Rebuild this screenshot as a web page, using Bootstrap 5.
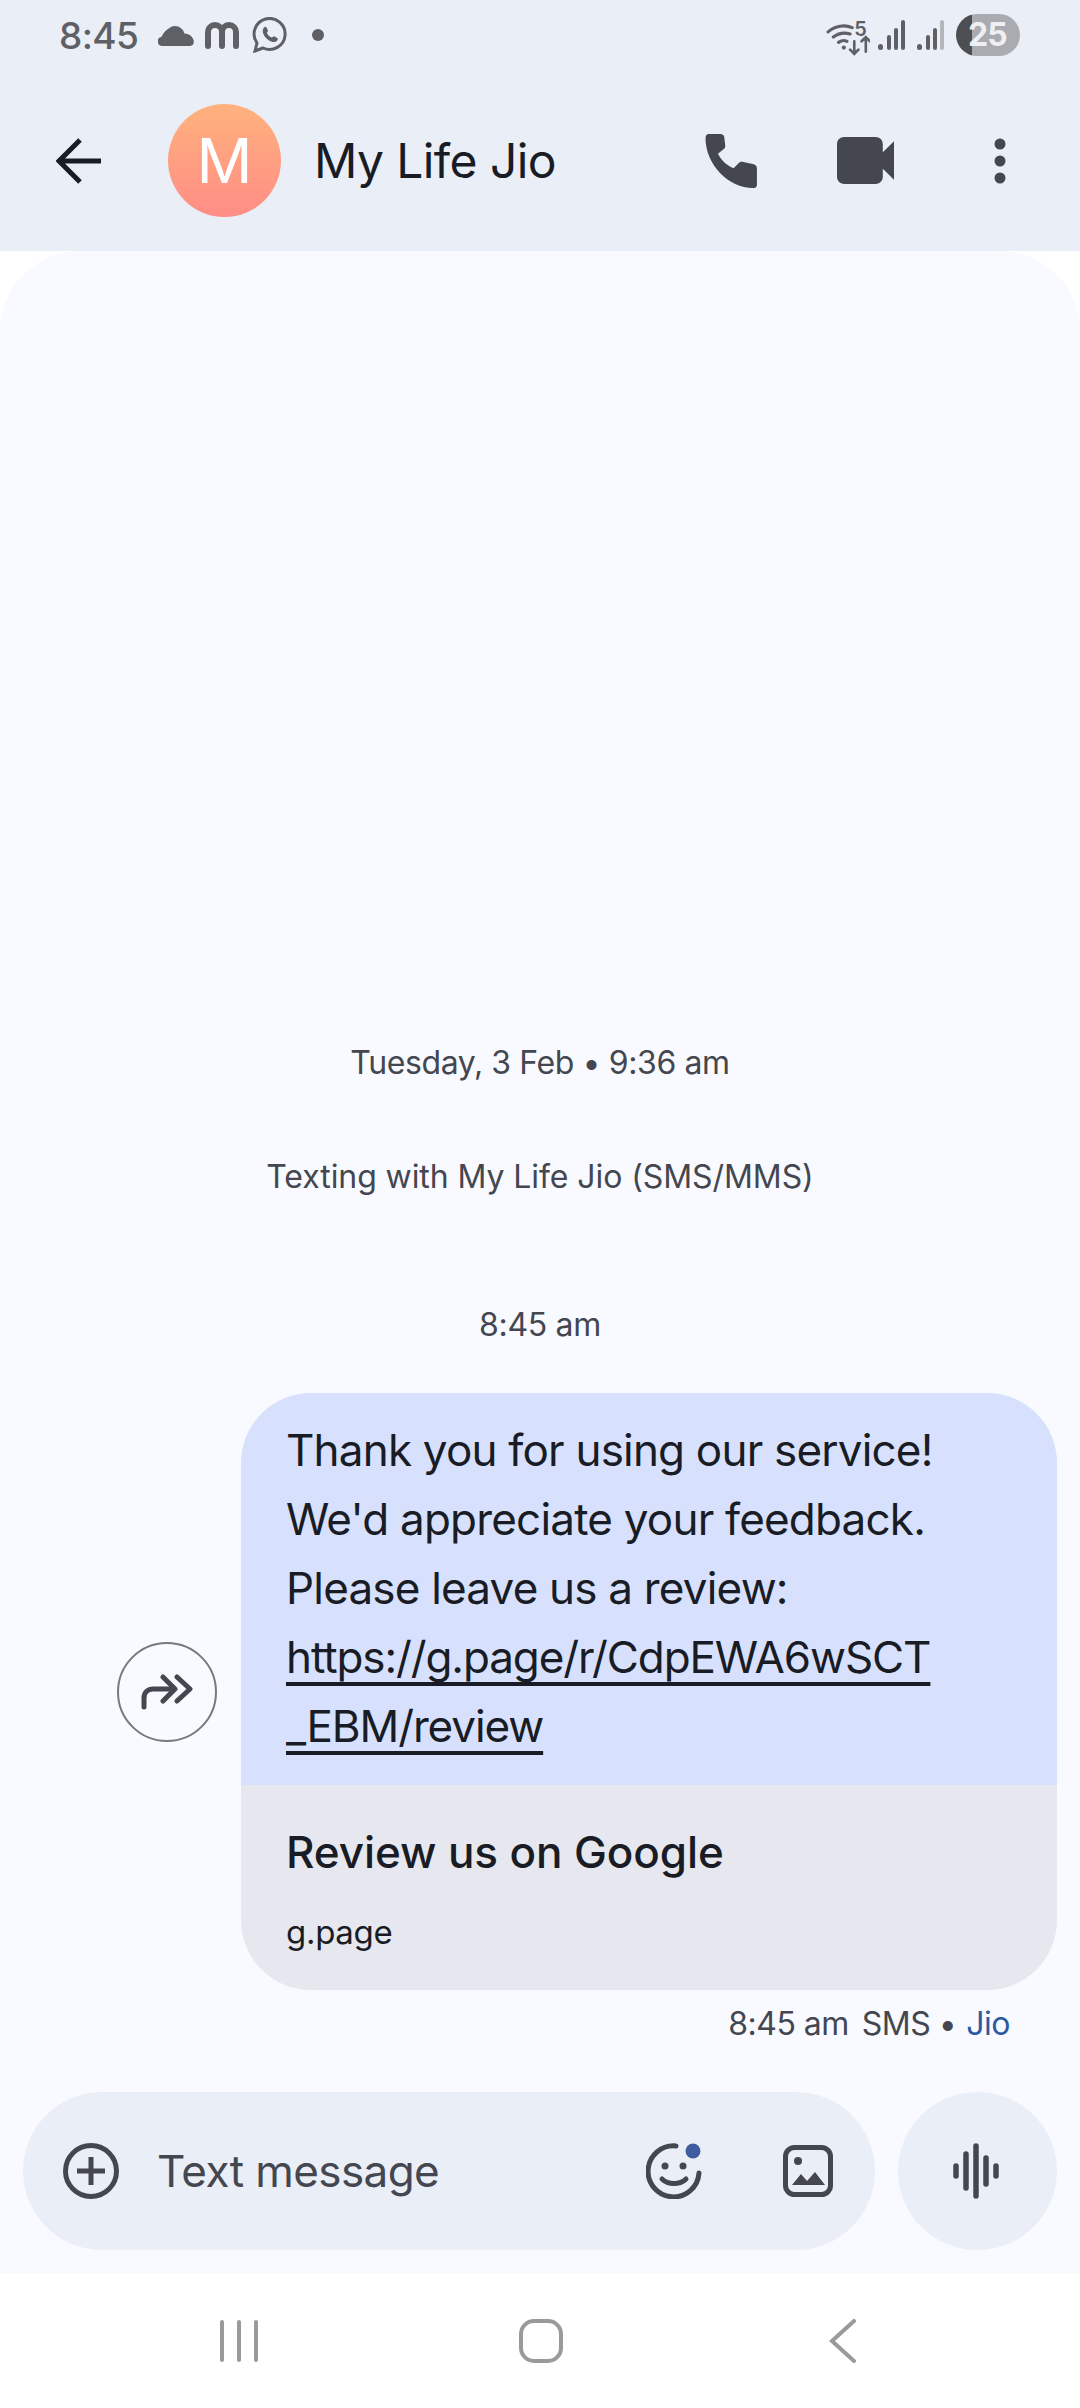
<!DOCTYPE html>
<html lang="en">

<head>
    <meta charset="UTF-8">
    <meta name="viewport" content="width=device-width, initial-scale=1">
    <title>My Life Jio</title>
    <link href="https://cdn.jsdelivr.net/npm/bootstrap@5.3.3/dist/css/bootstrap.min.css" rel="stylesheet">
    <style>
        html, body { height: 2408px; }
        body { width: 1080px; background: #fff; font-family: "Inter", "Liberation Sans", sans-serif; color: #191c24; overflow: hidden; }
        svg { display: block; flex: none; }

        .phone-top { height: 251px; background: #eaeef6; }
        .status-row { height: 70px; padding: 0 60px 0 59px; color: #5e6065; }
        .status-time { font-size: 37px; font-weight: 500; letter-spacing: -.6px; line-height: 1; width: 99px; }
        .status-m { margin-left: 10px; }
        .status-wa { margin-left: 12px; }
        .status-dot { margin-left: 24px; }
        .status-sig1 { margin-left: 8px; }
        .status-sig2 { margin-left: 12px; }
        .battery-pill { width: 64px; height: 42px; margin-left: 12px; border-radius: 21px; background: linear-gradient(90deg, #4d4e52 0 16px, #aaabb0 16px); color: #eeeff3; font-size: 32px; font-weight: 700; line-height: 42px; padding-left: 12px; letter-spacing: -1px; }

        .app-bar { height: 181px; padding-left: 56px; }
        .person-pic { width: 113px; height: 113px; margin-left: 67px; background: linear-gradient(#ffb27d, #ff8d86); color: #fff; font-size: 62px; line-height: 1; }
        .person-name { font-size: 48px; letter-spacing: -.6px; margin-left: 33px; line-height: 1; }
        .bar-call { margin-left: 149px; }
        .bar-video { margin-left: 78px; }
        .bar-more { margin-left: 100px; }

        .thread { background: #f8faff; border-radius: 80px 80px 0 0; min-height: 0; }
        .info-text { font-size: 32px; letter-spacing: -.3px; color: #44474f; text-align: center; line-height: 1; }
        .info-date { margin-bottom: 82px; letter-spacing: -.4px; }
        .info-with { margin-bottom: 116px; letter-spacing: -.08px; }
        .info-time { margin-bottom: 52px; }

        .msg-row { padding-right: 23px; }
        .forward-btn { width: 100px; height: 100px; border: 2px solid #77797e; margin-right: 24px; }
        .msg-bubble { width: 816px; border-radius: 70px; overflow: hidden; }
        .msg-body { background: #d7e1fd; height: 392px; padding: 23px 45px 0; font-size: 44px; line-height: 69px; letter-spacing: -.8px; }
        .msg-body u { letter-spacing: -1.1px; text-underline-offset: 9px; text-decoration-thickness: 4px; }
        .msg-card { background: #e6e7ef; height: 205px; padding: 33px 45px 0; }
        .card-head { font-size: 44px; font-weight: 500; letter-spacing: -.1px; line-height: 68px; }
        .card-site { font-size: 33px; letter-spacing: -.3px; line-height: 40px; margin-top: 26px; }
        .msg-meta { height: 102px; padding: 16px 70px 0 0; font-size: 32px; color: #44474f; letter-spacing: -.5px; line-height: 36px; }
        .meta-sms { margin-left: 13px; }
        .sim-name { color: #2c5aa0; margin-left: 10px; }

        .composer { padding: 0 23px 23px; gap: 23px; }
        .text-pill { width: 852px; height: 158px; background: #eaeef6; border-radius: 79px; padding-left: 40px; }
        .text-hint { font-size: 44px; letter-spacing: -.6px; color: #44474f; margin-left: 38px; line-height: 1; }
        .emoji-btn { margin-left: 207px; }
        .image-btn { margin-left: 81px; }
        .voice-btn { width: 159px; height: 158px; background: #eaeef6; padding-right: 4px; }

        .nav-strip { height: 135px; background: #fff; padding-left: 220px; }
        .nav-home { margin-left: 261px; }
        .nav-back { margin-left: 266px; }
    </style>
</head>

<body class="d-flex flex-column">
    <!-- status bar + app bar -->
    <header class="phone-top flex-shrink-0">
        <div class="status-row d-flex align-items-center">
            <span class="status-time">8:45</span>
            <svg width="36" height="21" viewBox="0 0 34 20" fill="#5e6065"><path d="M4 20a4.500 4.500 0 0 1-.8-8.900C5 7 8 4.500 13 1.500 18-.5 24 3 25 8c5 0 9 4 9 8 0 2-1.500 4-3.500 4z"/></svg>
            <svg class="status-m" width="36" height="28" viewBox="0 0 36 28" fill="none" stroke="#5e6065" stroke-width="6" stroke-linecap="round"><path d="M4 25V11a7 7 0 0 1 14 0v14M18 11a7 7 0 0 1 14 0v14"/></svg>
            <svg class="status-wa" width="36" height="36" viewBox="0 0 36 36" fill="none" stroke="#5e6065"><path stroke-width="3" d="M3 34l2-8A15.500 15.500 0 1 1 11 31z"/><path fill="#5e6065" stroke="none" d="M12 10.500c1-1 2-1 2.500 0l1.500 3c.3.700-1.200 1.800-1 2.500.8 2 2.500 3.500 4.500 4.500.8.200 2-1.500 2.700-1.200l3 1.600c1 .6.800 1.500 0 2.500-1.500 1.800-3.500 2-6 1-3.800-1.500-6.500-4.200-8-8-.8-2.300-.5-4.300.8-5.900z"/></svg>
            <svg class="status-dot" width="12" height="12" viewBox="0 0 12 12" fill="#5e6065"><circle cx="6" cy="6" r="6"/></svg>
            <span class="flex-grow-1"></span>
            <svg width="44" height="44" viewBox="0 -9 42 42" fill="none" stroke="#5e6065" stroke-width="3" stroke-linecap="round"><path d="M2 9C9 3 18 2 25 5M7 14c5-4 11-4.500 16-3M12 19c3-2 6-2 8-1"/><circle cx="17" cy="24" r="2" fill="#5e6065" stroke="none"/><path stroke-width="2.500" d="M27 18v12m-4-4l4 4 4-4M38 28V14m-4 4l4-4 4 4"/><text x="27" y="13" font-size="19" font-weight="600" fill="#5e6065" stroke="none" font-family="Inter, sans-serif">5</text></svg>
            <svg class="status-sig1" width="27" height="30" viewBox="0 0 27 30" fill="#5e6065"><rect x="0" y="24" width="5" height="6" rx="2.500"/><rect x="9" y="15" width="4" height="15" rx="2"/><rect x="16" y="8" width="4" height="22" rx="2"/><rect x="23" y="0" width="4" height="30" rx="2"/></svg>
            <svg class="status-sig2" width="27" height="30" viewBox="0 0 27 30" fill="#5e6065"><rect x="0" y="24" width="5" height="6" rx="2.500"/><rect x="9" y="15" width="4" height="15" rx="2"/><rect x="16" y="8" width="4" height="22" rx="2"/><rect x="23" y="0" width="4" height="30" rx="2" fill="#b4b6ba"/></svg>
            <span class="battery-pill">25</span>
        </div>
        <div class="app-bar d-flex align-items-center">
            <svg width="45" height="46" viewBox="0 0 45 46" fill="none" stroke="#191c24" stroke-width="5"><path d="M45 23H4M24 2L3 23l21 21"/></svg>
            <span class="person-pic rounded-circle d-flex align-items-center justify-content-center">M</span>
            <span class="person-name">My Life Jio</span>
            <svg class="bar-call" width="54" height="54" viewBox="0 0 51 52" fill="#44474f"><path d="M3 0h11c2 0 4 1 4 3l1 8c0 2-.500 3-2 4l-5 4c3 6 8 11 15 14l5-5c1.500-1.500 3-1.500 4.500-1l9 2c2.500.500 4 2 4 4v16c0 2-1.500 3-3.500 3C22 52 0 29 0 4c0-2 1-4 3-4z"/></svg>
            <svg class="bar-video" width="57" height="47" viewBox="0 0 56 46" fill="#44474f"><path d="M7 0h31c4 0 7 3 7 7v8l11-11v38L45 31v8c0 4-3 7-7 7H7c-4 0-7-3-7-7V7c0-4 3-7 7-7z"/></svg>
            <svg class="bar-more" width="12" height="46" viewBox="0 0 12 46" fill="#44474f"><circle cx="6" cy="6" r="5.500"/><circle cx="6" cy="23" r="5.500"/><circle cx="6" cy="40" r="5.500"/></svg>
        </div>
    </header>

    <!-- conversation -->
    <main class="thread flex-grow-1 d-flex flex-column justify-content-end">
        <div class="info-text info-date">Tuesday, 3 Feb • 9:36 am</div>
        <div class="info-text info-with">Texting with My Life Jio (SMS/MMS)</div>
        <div class="info-text info-time">8:45 am</div>

        <div class="msg-row d-flex justify-content-end align-items-center">
            <button class="forward-btn btn rounded-circle p-0 d-flex align-items-center justify-content-center" type="button">
                <svg width="52" height="36" viewBox="0 0 52 36" fill="none" stroke="#44474f" stroke-width="5" stroke-linecap="round" stroke-linejoin="round"><path d="M3 33V24c0-6 4-9 9-9h20"/><path d="M22 3l12 12-12 12M36 3l13 12-13 12"/></svg>
            </button>
            <div class="msg-bubble">
                <div class="msg-body">Thank you for using our service!<br>We'd appreciate your feedback.<br>Please leave us a review:<br><u>https://g.page/r/CdpEWA6wSCT<br>_EBM/review</u></div>
                <div class="msg-card">
                    <div class="card-head">Review us on Google</div>
                    <div class="card-site">g.page</div>
                </div>
            </div>
        </div>
        <div class="msg-meta d-flex justify-content-end">
            <span>8:45 am</span><span class="meta-sms">SMS •</span><span class="sim-name">Jio</span>
        </div>

        <div class="composer d-flex">
            <div class="text-pill d-flex align-items-center">
                <svg width="56" height="56" viewBox="0 0 56 56" fill="none" stroke="#44474f" stroke-width="5"><circle cx="28" cy="28" r="25.500"/><path d="M14 28h28M28 14v28"/></svg>
                <span class="text-hint">Text message</span>
                <span class="emoji-btn">
                    <svg width="56" height="56" viewBox="0 0 56 56" fill="none" stroke="#44474f" stroke-width="5" stroke-linecap="round"><path d="M30 3A25.500 25.500 0 1 0 53 30"/><circle cx="19" cy="23" r="3.500" fill="#44474f" stroke="none"/><circle cx="37" cy="23" r="3.500" fill="#44474f" stroke="none"/><path d="M16 36c6 6 18 6 24 0"/><circle cx="47" cy="8" r="7.500" fill="#3f5da0" stroke="none"/></svg>
                </span>
                <svg class="image-btn" width="50" height="52" viewBox="0 0 50 52" fill="none" stroke="#44474f" stroke-width="5"><rect x="2.500" y="2.500" width="45" height="47" rx="9"/><circle cx="15" cy="16" r="4" fill="#44474f" stroke="none"/><path fill="#44474f" stroke="none" d="M9 40l9-11 6 7 8-9 10 13z"/></svg>
            </div>
            <div class="voice-btn rounded-circle d-flex align-items-center justify-content-center">
                <svg width="48" height="56" viewBox="0 0 48 56" fill="none" stroke="#44474f" stroke-width="5.500" stroke-linecap="round"><path d="M4 23v10M14 11v34M24 3v50M34 15v26M44 23v10"/></svg>
            </div>
        </div>
    </main>

    <!-- system navigation -->
    <footer class="nav-strip flex-shrink-0 d-flex align-items-center">
        <svg width="38" height="42" viewBox="0 0 38 42" fill="none" stroke="#9a9a9a" stroke-width="4" stroke-linecap="round"><path d="M2 2v38M19 2v38M36 2v38"/></svg>
        <svg class="nav-home" width="44" height="44" viewBox="0 0 44 44" fill="none" stroke="#9a9a9a" stroke-width="4"><rect x="2" y="2" width="40" height="40" rx="13"/></svg>
        <svg class="nav-back" width="28" height="44" viewBox="0 0 28 44" fill="none" stroke="#9a9a9a" stroke-width="4" stroke-linecap="round"><path d="M25 2L3 22l22 20"/></svg>
    </footer>

    <script src="https://cdn.jsdelivr.net/npm/bootstrap@5.3.3/dist/js/bootstrap.bundle.min.js"></script>
</body>

</html>
